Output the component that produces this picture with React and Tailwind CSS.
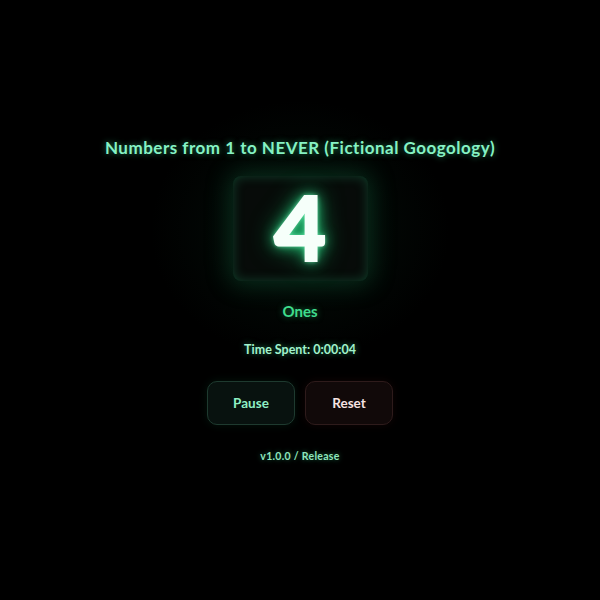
import React, { useState } from 'react';

export default function App() {
    const [running, setRunning] = useState(true);

    return (
        <div className="w-[600px] h-[600px] bg-black flex flex-col items-center pt-[137px] font-['Lato','Noto_Sans',sans-serif] relative overflow-hidden">
            <div className="absolute left-[150px] top-[100px] w-[300px] h-[260px] rounded-full bg-[radial-gradient(closest-side,rgba(20,80,50,0.18),transparent)] pointer-events-none" />

            <h1 className="relative text-[17px] font-bold tracking-[0.5px] text-[#86f2c4] [text-shadow:0_0_6px_rgba(60,220,150,0.55)] leading-[22px]">
                Numbers from 1 to NEVER (Fictional Googology)
            </h1>

            {/* counter box */}
            <div className="relative mt-[17px] w-[135px] h-[105px] rounded-[8px] bg-[#070b09] flex items-center justify-center shadow-[0_0_24px_4px_rgba(30,160,100,0.25),inset_0_0_12px_rgba(40,180,120,0.3)]">
                <span className="text-[90px] leading-none font-black text-[#f6fffa] [-webkit-text-stroke:2px_#f6fffa] [text-shadow:0_0_5px_rgba(140,255,200,0.95),0_0_14px_rgba(40,230,140,0.9),0_0_26px_rgba(30,210,120,0.7)] -mt-[6px]">
                    4
                </span>
            </div>

            <div className="relative mt-[20px] text-[15px] font-bold text-[#3fdc8c] [text-shadow:0_0_6px_rgba(50,220,130,0.5)] leading-[20px]">
                Ones
            </div>

            <div className="relative mt-[20px] text-[12.5px] font-bold text-[#a2f2cc] [text-shadow:0_0_6px_rgba(60,220,150,0.55)] leading-[18px]">
                Time Spent: 0:00:04
            </div>

            <div className="relative mt-[22px] flex gap-[10px]">
                <button
                    onClick={() => setRunning(!running)}
                    className="w-[88px] h-[44px] rounded-[10px] border border-[#1e3a2f] bg-[#08120f] text-[13.5px] font-bold text-[#8ff0c4] shadow-[0_0_10px_rgba(30,140,90,0.15)]"
                >
                    {running ? 'Pause' : 'Resume'}
                </button>
                <button className="w-[88px] h-[44px] rounded-[10px] border border-[#2e1b1b] bg-[#110909] text-[13.5px] font-bold text-[#f6e2e2] shadow-[0_0_10px_rgba(140,40,40,0.12)]">
                    Reset
                </button>
            </div>

            <div className="relative mt-[24px] text-[10.5px] font-bold tracking-[0.3px] text-[#8fe6bd] [text-shadow:0_0_5px_rgba(60,220,150,0.45)]">
                v1.0.0 / Release
            </div>
        </div>
    );
}
